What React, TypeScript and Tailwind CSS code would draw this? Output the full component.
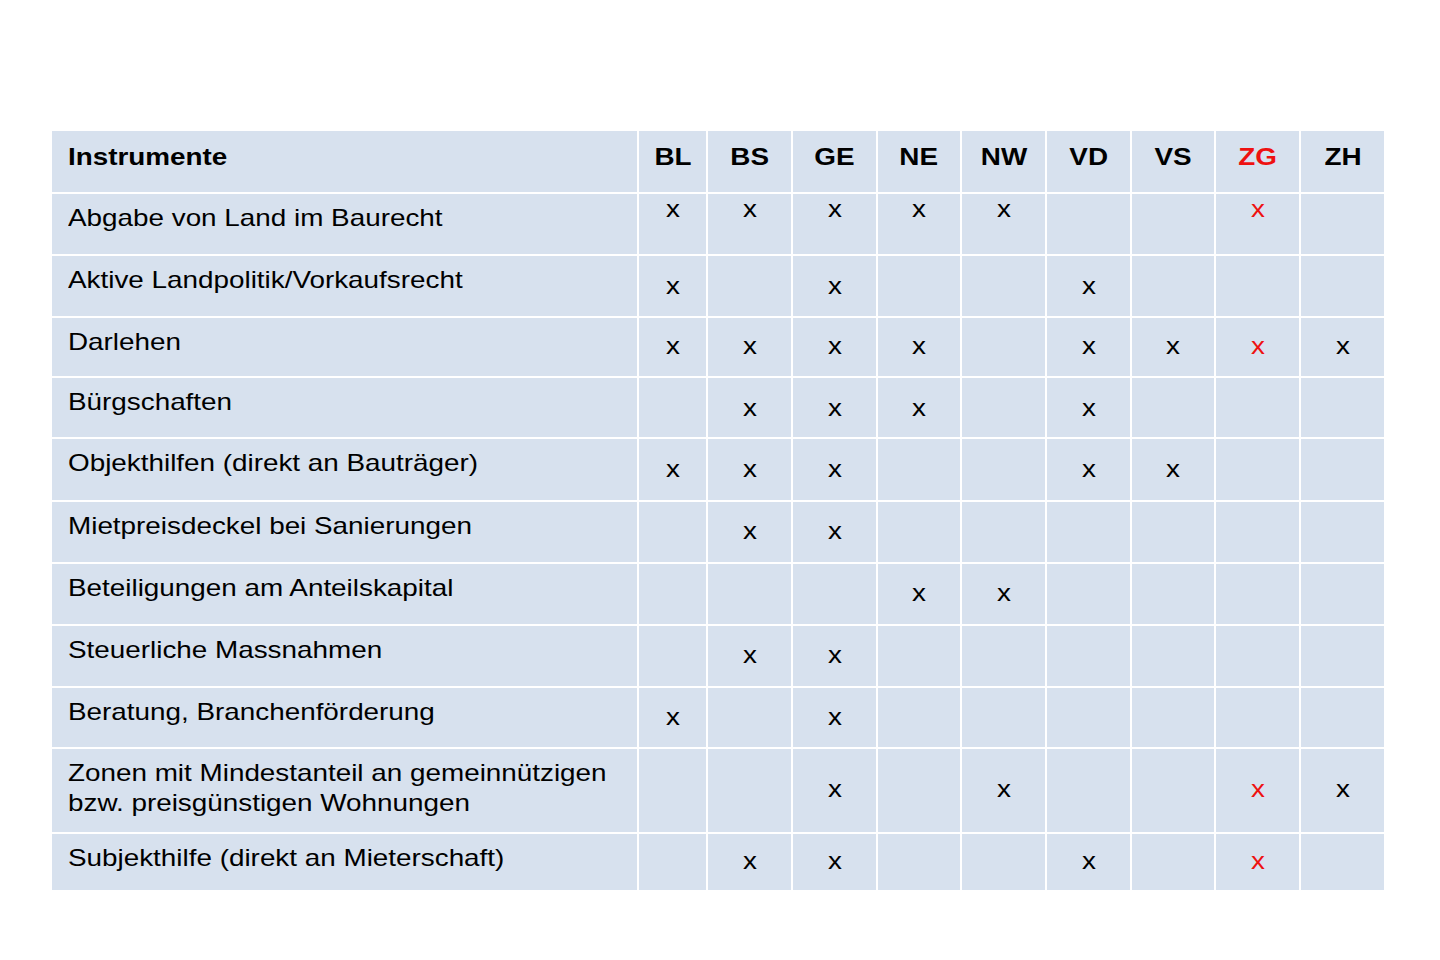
import React from "react";

const COLS = ["BL", "BS", "GE", "NE", "NW", "VD", "VS", "ZG", "ZH"];

type Row = {
  label: React.ReactNode;
  marks: string[];
  h: string;
  xp: string;
};

const ROWS: Row[] = [
  { label: "Abgabe von Land im Baurecht", marks: ["BL", "BS", "GE", "NE", "NW", "ZG"], h: "h-[60px]", xp: "pt-[0px]" },
  { label: "Aktive Landpolitik/Vorkaufsrecht", marks: ["BL", "GE", "VD"], h: "h-[60px]", xp: "pt-[15px]" },
  { label: "Darlehen", marks: ["BL", "BS", "GE", "NE", "VD", "VS", "ZG", "ZH"], h: "h-[58px]", xp: "pt-[13px]" },
  { label: "Bürgschaften", marks: ["BS", "GE", "NE", "VD"], h: "h-[59px]", xp: "pt-[15px]" },
  { label: "Objekthilfen (direkt an Bauträger)", marks: ["BL", "BS", "GE", "VD", "VS"], h: "h-[61px]", xp: "pt-[15px]" },
  { label: "Mietpreisdeckel bei Sanierungen", marks: ["BS", "GE"], h: "h-[60px]", xp: "pt-[14px]" },
  { label: "Beteiligungen am Anteilskapital", marks: ["NE", "NW"], h: "h-[60px]", xp: "pt-[14px]" },
  { label: "Steuerliche Massnahmen", marks: ["BS", "GE"], h: "h-[60px]", xp: "pt-[14px]" },
  { label: "Beratung, Branchenförderung", marks: ["BL", "GE"], h: "h-[59px]", xp: "pt-[14px]" },
  {
    label: (
      <>
        Zonen mit Mindestanteil an gemeinnützigen
        <br />
        bzw. preisgünstigen Wohnungen
      </>
    ),
    marks: ["GE", "NW", "ZG", "ZH"],
    h: "h-[83px]",
    xp: "pt-[25px]",
  },
  { label: "Subjekthilfe (direkt an Mieterschaft)", marks: ["BS", "GE", "VD", "ZG"], h: "h-[56px]", xp: "pt-[12px]" },
];

const GRID =
  "grid grid-cols-[585px_67px_83px_83px_82px_83px_83px_82px_83px_83px] gap-x-[2px]";

export default function App() {
  return (
    <div
      className="min-h-[960px] w-[1440px] bg-white pt-[131px] pl-[52px] text-black"
      style={{ fontFamily: '"Liberation Sans", Arial, sans-serif' }}
    >
      <div className="flex w-[1332px] flex-col gap-y-[2px] bg-white">
        {/* header */}
        <div className={`${GRID} h-[61px]`}>
          <div className="bg-[#d7e1ee] pl-[16px] pt-[11px]">
            <span className="inline-block origin-left scale-x-[1.16] text-[24px] leading-[30px] font-bold whitespace-nowrap">
              Instrumente
            </span>
          </div>
          {COLS.map((c) => (
            <div key={c} className="flex justify-center bg-[#d7e1ee] pt-[11px]">
              <span
                className={`inline-block scale-x-[1.16] text-[24px] leading-[30px] font-bold ${
                  c === "ZG" ? "text-[#ee1111]" : "text-black"
                }`}
              >
                {c}
              </span>
            </div>
          ))}
        </div>
        {ROWS.map((r, i) => (
          <div key={i} className={`${GRID} ${r.h}`}>
            <div className="bg-[#d7e1ee] pl-[16px] pt-[9px]">
              <span className="inline-block origin-left scale-x-[1.16] text-[24px] leading-[30px] whitespace-nowrap">
                {r.label}
              </span>
            </div>
            {COLS.map((c) => (
              <div key={c} className={`flex justify-center bg-[#d7e1ee] ${r.xp}`}>
                {r.marks.includes(c) && (
                  <span
                    className={`inline-block h-[30px] scale-x-[1.16] text-[24px] leading-[30px] ${
                      c === "ZG" ? "text-[#ee1111]" : "text-black"
                    }`}
                  >
                    x
                  </span>
                )}
              </div>
            ))}
          </div>
        ))}
      </div>
    </div>
  );
}
